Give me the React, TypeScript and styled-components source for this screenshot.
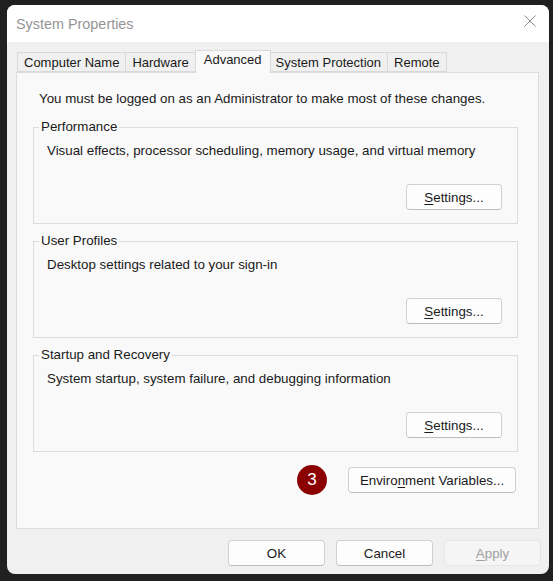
import React from "react";
import styled, { createGlobalStyle } from "styled-components";

const GlobalStyle = createGlobalStyle`
  html, body {
    margin: 0;
    background: #202020;
  }
  body {
    font-family: "Liberation Sans", Arial, sans-serif;
    font-size: 13.33px;
    color: #1a1a1a;
  }
`;

const Window = styled.div`
  margin: 5px 0 0 7px;
  width: 542px;
  height: 569px;
  border-radius: 8px;
  background: #f0f0f0;
  overflow: hidden;
  display: flex;
  flex-direction: column;
`;

const TitleBar = styled.div`
  height: 37px;
  background: #ffffff;
  display: flex;
  align-items: center;
  justify-content: space-between;
  padding: 0 13px 0 9px;
  flex-shrink: 0;
`;

const Title = styled.span`
  font-size: 14.4px;
  color: #959595;
  margin-top: 1px;
`;

const CloseButton = styled.button`
  border: none;
  background: transparent;
  padding: 0;
  width: 12px;
  height: 12px;
  display: flex;
  margin-top: -5px;
`;

const Body = styled.div`
  flex: 1;
  display: flex;
  flex-direction: column;
  padding: 8px 10px 8px 9px;
`;

const TabStrip = styled.div`
  display: flex;
  align-items: flex-end;
  height: 22px;
  padding-left: 1px;
  position: relative;
  z-index: 1;
`;

const Tab = styled.div<{ $active?: boolean }>`
  height: ${(p) => (p.$active ? "23px" : "20px")};
  box-sizing: border-box;
  padding: ${(p) => (p.$active ? "1px 8px 0" : "2px 6px 0")};
  margin: ${(p) => (p.$active ? "0 -1px -1px" : "0")};
  border: 1px solid #d9d9d9;
  border-bottom: ${(p) => (p.$active ? "none" : "1px solid #d9d9d9")};
  border-left: ${(p) => (p.$active ? "1px solid #d9d9d9" : "none")};
  background: ${(p) => (p.$active ? "#f9f9f9" : "#f0f0f0")};
  font-size: 13px;
  line-height: 16px;
  white-space: nowrap;
  position: relative;
  z-index: ${(p) => (p.$active ? 2 : 1)};
  &:first-child {
    border-left: 1px solid #d9d9d9;
  }
`;

const Panel = styled.div`
  height: 457px;
  box-sizing: border-box;
  border: 1px solid #dcdcdc;
  background: #f9f9f9;
  padding: 18px 20px 0 16px;
  display: flex;
  flex-direction: column;
`;

const Intro = styled.div`
  padding-left: 6px;
  line-height: 16px;
  margin-bottom: 12px;
`;

const GroupBox = styled.fieldset`
  margin: 0 0 9px;
  height: 105px;
  box-sizing: border-box;
  border: 1px solid #dcdcdc;
  padding: 8px 15px 13px 13px;
  min-width: 0;
`;

const Legend = styled.legend`
  padding: 0 2px;
  margin-left: -8px;
  line-height: 16px;
`;

const GroupText = styled.div`
  line-height: 16px;
`;

const ButtonRow = styled.div`
  display: flex;
  justify-content: flex-end;
  margin-top: 25px;
`;

const Button = styled.button<{ $width?: number; $disabled?: boolean }>`
  width: ${(p) => p.$width ?? 96}px;
  height: 26px;
  box-sizing: border-box;
  border: 1px solid ${(p) => (p.$disabled ? "#e6e6e6" : "#d0d0d0")};
  border-bottom-color: ${(p) => (p.$disabled ? "#e6e6e6" : "#bdbdbd")};
  border-radius: 4px;
  background: ${(p) => (p.$disabled ? "#f5f5f5" : "#fdfdfd")};
  color: ${(p) => (p.$disabled ? "#a0a0a0" : "#1a1a1a")};
  font-family: "Liberation Sans", Arial, sans-serif;
  font-size: 13.33px;
  padding: 0;
  u {
    text-underline-offset: 2px;
  }
`;

const EnvRow = styled.div`
  display: flex;
  justify-content: flex-end;
  align-items: center;
  gap: 21px;
  margin-top: 4px;
  padding-right: 2px;
`;

const Badge = styled.div`
  width: 30px;
  height: 30px;
  border-radius: 50%;
  background: #8b0000;
  color: #ffffff;
  font-size: 17px;
  display: flex;
  align-items: center;
  justify-content: center;
`;

const Footer = styled.div`
  display: flex;
  justify-content: flex-end;
  gap: 11px;
  margin-top: 11px;
  margin-right: -2px;
`;

const groups = [
  {
    title: "Performance",
    text: "Visual effects, processor scheduling, memory usage, and virtual memory",
  },
  { title: "User Profiles", text: "Desktop settings related to your sign-in" },
  {
    title: "Startup and Recovery",
    text: "System startup, system failure, and debugging information",
  },
];

const tabs = ["Computer Name", "Hardware", "Advanced", "System Protection", "Remote"];

const App = () => (
  <>
    <GlobalStyle />
    <Window>
      <TitleBar>
        <Title>System Properties</Title>
        <CloseButton aria-label="Close">
          <svg width="12" height="12" viewBox="0 0 12 12">
            <path d="M0.5 0.5L11.5 11.5M11.5 0.5L0.5 11.5" stroke="#8a8a8a" strokeWidth="1" />
          </svg>
        </CloseButton>
      </TitleBar>
      <Body>
        <TabStrip>
          {tabs.map((t) => (
            <Tab key={t} $active={t === "Advanced"}>
              {t}
            </Tab>
          ))}
        </TabStrip>
        <Panel>
          <Intro>You must be logged on as an Administrator to make most of these changes.</Intro>
          {groups.map((g) => (
            <GroupBox key={g.title}>
              <Legend>{g.title}</Legend>
              <GroupText>{g.text}</GroupText>
              <ButtonRow>
                <Button>
                  <u>S</u>ettings...
                </Button>
              </ButtonRow>
            </GroupBox>
          ))}
          <EnvRow>
            <Badge>3</Badge>
            <Button $width={168}>
              Enviro<u>n</u>ment Variables...
            </Button>
          </EnvRow>
        </Panel>
        <Footer>
          <Button $width={97}>OK</Button>
          <Button $width={97}>Cancel</Button>
          <Button $width={97} $disabled>
            <u>A</u>pply
          </Button>
        </Footer>
      </Body>
    </Window>
  </>
);

export default App;
